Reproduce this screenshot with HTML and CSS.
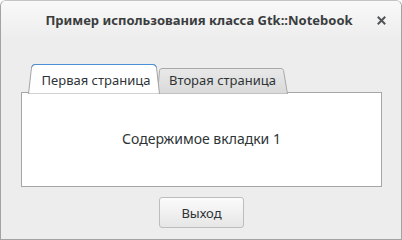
FILE: index.html
```html
<!DOCTYPE html>
<html>
<head>
<meta charset="UTF-8">
<title>Пример использования класса Gtk::Notebook</title>
<link rel="stylesheet" href="styles.css">
</head>
<body>
  <div class="window">
    <div class="titlebar">
      <span class="title">Пример использования класса Gtk::Notebook</span>
      <svg class="close" width="9" height="9" viewBox="0 0 9 9">
        <path d="M1.5 1.5 L7.5 7.5 M7.5 1.5 L1.5 7.5" stroke="#50565a" stroke-width="2" stroke-linecap="square"/>
      </svg>
    </div>
    <div class="main">
      <div class="notebook">
        <div class="tabs">
          <div class="tab tab-active">
            <svg class="tab-bg" width="132" height="31" viewBox="0 0 132 31">
              <path d="M0.5 31 L3.5 4.5 Q4 1.5 7 1.5 H125 Q128 1.5 128.5 4.5 L131.5 31 Z" fill="#ffffff" stroke="#a4a4a4"/>
              <path d="M3.6 4.5 Q4 1.5 7 1.5 H125 Q128 1.5 128.4 4.5" fill="none" stroke="#4a90d9"/>
            </svg>
            <span class="tab-label">Первая страница</span>
          </div>
          <div class="tab tab-second">
            <svg class="tab-bg" width="131" height="27" viewBox="0 0 131 27">
              <defs>
                <linearGradient id="g2" x1="0" y1="0" x2="0" y2="1">
                  <stop offset="0" stop-color="#e9e9e9"/>
                  <stop offset="1" stop-color="#d9d9d9"/>
                </linearGradient>
              </defs>
              <path d="M0.5 27 L2.5 3.5 Q3 1.5 5 1.5 H124 Q126 1.5 126.5 3.5 L130.5 27 Z" fill="url(#g2)" stroke="#a8a8a8"/>
            </svg>
            <span class="tab-label">Вторая страница</span>
          </div>
        </div>
        <div class="page">Содержимое вкладки 1</div>
      </div>
      <div class="actions">
        <button class="btn">Выход</button>
      </div>
    </div>
  </div>
</body>
</html>
```
FILE: styles.css
```css
/* General Styles */
body {
    margin: 0;
    overflow: hidden;
    font-family: 'Noto Sans', 'DejaVu Sans', sans-serif;
    font-size: 13px;
    color: #2e3436;
}

.window {
    width: 402px;
    height: 240px;
    box-sizing: border-box;
    border: 1px solid #a3a3a3;
    border-top-color: #c4c4c4;
    border-radius: 6px 6px 0 0;
    background-color: #ededed;
    overflow: hidden;
}

.titlebar {
    height: 38px;
    display: flex;
    align-items: center;
    justify-content: center;
    position: relative;
    background: linear-gradient(#f9f9f9, #ededed);
}

.title {
    font-weight: bold;
    color: #3a3d3e;
    margin-left: -4px;
}

.close {
    position: absolute;
    right: 15px;
    top: 15px;
}

.main {
    padding-top: 24px;
}

.notebook {
    margin-left: 20px;
    width: 361px;
}

.tabs {
    display: flex;
    align-items: flex-end;
    height: 30px;
    padding-left: 7px;
    position: relative;
    z-index: 1;
}

.tab {
    position: relative;
    display: flex;
    justify-content: center;
    box-sizing: border-box;
}

.tab-bg {
    position: absolute;
    left: 0;
    top: 0;
}

.tab-label {
    position: relative;
    line-height: 18px;
}

.tab-active {
    width: 132px;
    height: 31px;
    margin-bottom: -1px;
    padding-top: 8px;
    padding-left: 4px;
    z-index: 2;
}

.tab-second {
    width: 131px;
    height: 27px;
    margin-bottom: -1px;
    margin-left: -3px;
    padding-top: 4px;
    color: #2e3436;
}

.page {
    height: 95px;
    box-sizing: border-box;
    margin-top: -1px;
    border: 1px solid #a6a6a6;
    background-color: #ffffff;
    display: flex;
    align-items: center;
    justify-content: center;
    padding-bottom: 2px;
    font-size: 14px;
}

.actions {
    display: flex;
    justify-content: center;
    padding-top: 10px;
}

.btn {
    width: 85px;
    height: 31px;
    font-family: inherit;
    font-size: 13px;
    color: #2e3436;
    border: 1px solid #bdbdbd;
    border-radius: 3px;
    background: linear-gradient(#fbfbfb, #e6e6e6);
    padding: 0;
    margin-left: 1px;
}
```
